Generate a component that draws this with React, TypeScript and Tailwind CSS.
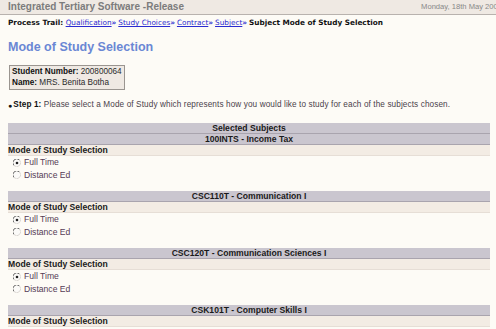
import React from "react";

const Radio = ({ checked }: { checked?: boolean }) => (
  <svg width="8" height="8" viewBox="0 0 8 8" className="shrink-0">
    <circle cx="4" cy="4" r="3.5" fill="#fbfaf8" />
    <path d="M1 6.5 A3.5 3.5 0 0 1 6.5 1" fill="none" stroke="#6f6f6f" strokeWidth="1" />
    <path d="M6.5 1 A3.5 3.5 0 0 1 1 6.5" fill="none" stroke="#dcd8d4" strokeWidth="1" />
    {checked && <circle cx="4" cy="4" r="1.3" fill="#202020" />}
  </svg>
);

const subjects = [
  "100INTS - Income Tax",
  "CSC110T - Communication I",
  "CSC120T - Communication Sciences I",
  "CSK101T - Computer Skills I",
];

const Block = ({ title, first }: { title: string; first?: boolean }) => (
  <div className={first ? "" : "mt-[10px]"}>
    <div className="h-[11px] bg-[#cac6cf] border-b border-[#a9a4ae] flex items-center justify-center text-[8.6px] font-bold text-[#1a1a1a] leading-none">
      {title}
    </div>
    <div className="h-[11px] bg-[#f3ece4] border-b border-[#e6ded6] flex items-center text-[8.6px] font-bold text-[#1a1a1a] leading-none">
      Mode of Study Selection
    </div>
    <div className="h-[13px] flex items-center pl-[5px] gap-[3px] text-[8.6px] text-[#553b55] leading-none">
      <Radio checked />
      <span>Full Time</span>
    </div>
    <div className="h-[12px] flex items-center pl-[5px] gap-[3px] text-[8.6px] text-[#553b55] leading-none">
      <Radio />
      <span>Distance Ed</span>
    </div>
  </div>
);

export default function App() {
  return (
    <div className="w-[496px] h-[329px] overflow-hidden bg-[#fdfbf6] font-['Liberation_Sans',Arial,sans-serif]">
      <div className="h-[15px] bg-[#efe9e3] border-b border-[#b8b2ae] flex items-center pl-[8px] overflow-hidden">
        <span className="text-[10px] font-bold text-[#7c7c7c] whitespace-nowrap leading-none">
          Integrated Tertiary Software -Release
        </span>
        <span className="ml-auto mr-[-6px] text-[7.6px] text-[#888888] whitespace-nowrap leading-none">
          Monday, 18th May 2009
        </span>
      </div>
      <div className="mt-[3px] h-[10px] pl-[8px] flex items-center text-[7.3px] leading-none font-['DejaVu_Sans',Verdana,sans-serif] whitespace-nowrap">
        <span className="font-bold text-[#111]">Process Trail:&nbsp;</span>
        <a className="text-[#2a2ad0] underline">Qualification</a>
        <span className="text-[#2a2ad0] font-bold">»</span>
        <a className="text-[#2a2ad0] underline ml-[2px]">Study Choices</a>
        <span className="text-[#2a2ad0] font-bold">»</span>
        <a className="text-[#2a2ad0] underline ml-[2px]">Contract</a>
        <span className="text-[#2a2ad0] font-bold">»</span>
        <a className="text-[#2a2ad0] underline ml-[2px]">Subject</a>
        <span className="text-[#2a2ad0] font-bold">»</span>
        <span className="font-bold text-[#111] ml-[2px]">Subject Mode of Study Selection</span>
      </div>
      <div className="mt-[11px] pl-[8px] h-[16px] flex items-center text-[12.5px] font-bold text-[#6a87d4] leading-none">
        Mode of Study Selection
      </div>
      <div className="mt-[10px] ml-[9px] w-fit border border-[#9a9590] bg-[#efe9e3] px-[2px] py-[1px] text-[8.2px] leading-[10.5px] text-[#2a2a2a] whitespace-nowrap">
        <div>
          <span className="font-bold text-[#111]">Student Number:</span> 200800064
        </div>
        <div>
          <span className="font-bold text-[#111]">Name:</span> MRS. Benita Botha
        </div>
      </div>
      <div className="mt-[10px] pl-[8px] h-[11px] flex items-center text-[8.2px] tracking-[0.11px] leading-none text-[#4a3f4a] whitespace-nowrap">
        <span className="text-[#111] mr-[1px] text-[7px]">●</span>
        <span className="font-bold text-[#111]">Step 1:</span>&nbsp;Please select a Mode of Study which represents how you would like to study for each of the subjects chosen.
      </div>
      <div className="mt-[12px] ml-[8px] w-[482px]">
        <div className="h-[11px] bg-[#cac6cf] border-b border-[#a9a4ae] flex items-center justify-center text-[8.6px] font-bold text-[#1a1a1a] leading-none">
          Selected Subjects
        </div>
        {subjects.map((s, i) => (
          <Block key={s} title={s} first={i === 0} />
        ))}
      </div>
    </div>
  );
}
